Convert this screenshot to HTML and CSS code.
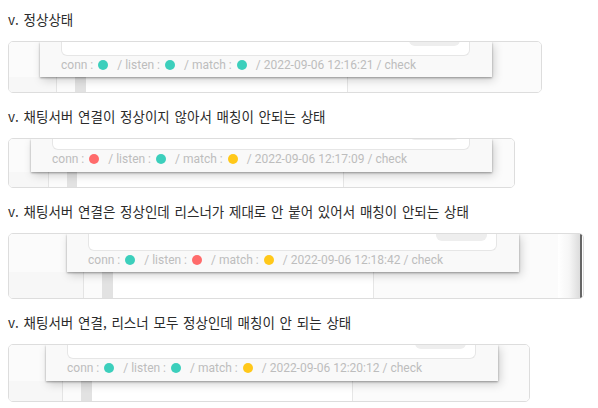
FILE: index.html
```html
<!DOCTYPE html>
<html lang="ko">
<head>
    <meta charset="UTF-8">
    <meta name="viewport" content="width=device-width, initial-scale=1.0">
    <title>채팅서버 상태 체크</title>
    <link rel="stylesheet" href="styles.css">
</head>
<body>

    <!-- 1. normal -->
    <p class="caption">v. 정상상태</p>
    <div class="shot shot-1">
        <div class="screen">
            <div class="panel">
                <div class="box"><span class="box-btn"></span></div>
                <div class="status">conn :<i class="dot ok"></i>/ listen :<i class="dot ok"></i>/ match :<i class="dot ok"></i>/ 2022-09-06 12:16:21 / check</div>
            </div>
            <div class="below">
                <span class="gutter"></span><span class="bar"></span><span class="mid"></span>
            </div>
        </div>
    </div>

    <!-- 2. chat server down -->
    <p class="caption">v. 채팅서버 연결이 정상이지 않아서 매칭이 안되는 상태</p>
    <div class="shot shot-2">
        <div class="screen">
            <div class="panel">
                <div class="box"><span class="box-btn"></span></div>
                <div class="status">conn :<i class="dot bad"></i>/ listen :<i class="dot ok"></i>/ match :<i class="dot warn"></i>/ 2022-09-06 12:17:09 / check</div>
            </div>
            <div class="below">
                <span class="gutter"></span><span class="bar"></span><span class="mid"></span>
            </div>
        </div>
    </div>

    <!-- 3. listener down -->
    <p class="caption">v. 채팅서버 연결은 정상인데 리스너가 제대로 안 붙어 있어서 매칭이 안되는 상태</p>
    <div class="shot shot-3">
        <div class="screen">
            <div class="panel">
                <div class="box"><span class="box-btn"></span></div>
                <div class="status">conn :<i class="dot ok"></i>/ listen :<i class="dot bad"></i>/ match :<i class="dot warn"></i>/ 2022-09-06 12:18:42 / check</div>
            </div>
            <div class="below">
                <span class="gutter"></span><span class="bar"></span><span class="mid"></span>
            </div>
        </div>
        <div class="edge"></div>
    </div>

    <!-- 4. matching only -->
    <p class="caption">v. 채팅서버 연결, 리스너 모두 정상인데 매칭이 안 되는 상태</p>
    <div class="shot shot-4">
        <div class="screen">
            <div class="panel">
                <div class="box"><span class="box-btn"></span></div>
                <div class="status">conn :<i class="dot ok"></i>/ listen :<i class="dot ok"></i>/ match :<i class="dot warn"></i>/ 2022-09-06 12:20:12 / check</div>
            </div>
            <div class="below">
                <span class="gutter"></span><span class="bar"></span><span class="mid"></span>
            </div>
        </div>
    </div>

</body>
</html>
```

FILE: styles.css
```css
body {
    margin: 0;
    padding: 9px 8px 0;
    background-color: #fff;
    font-family: 'Noto Sans CJK KR', 'Noto Sans', sans-serif;
    color: #333;
}
.caption {
    margin: 0;
    font-size: 13.5px;
    line-height: 20px;
    word-spacing: 1px;
    color: #2b2b2b;
}

/* screenshot frame */
.shot {
    display: flex;
    margin: 12px 0 13px;
    border: 1px solid #ddd;
    border-radius: 5px;
    background-color: #fff;
    overflow: hidden;
}
.screen {
    flex: 1;
    display: flex;
    flex-direction: column;
    background-color: #fbfbfb;
}
.panel {
    position: relative;
    z-index: 1;
    margin-left: 31px;
    width: 452px;
    background-color: #f9f9f9;
    box-shadow: 0 1px 2px rgba(0, 0, 0, 0.35), 2px 3px 9px rgba(0, 0, 0, 0.18);
}
.box {
    box-sizing: border-box;
    height: 14px;
    margin: 0 22px 0 21px;
    display: flex;
    justify-content: flex-end;
    align-items: flex-end;
    background-color: #fff;
    border: 1px solid #e6e6e6;
    border-top: none;
    border-radius: 0 0 6px 6px;
}
.box-btn {
    width: 51px;
    height: 100%;
    margin: 0 9px 9px 0;
    background-color: #eee;
    border-radius: 0 0 6px 6px;
}
.status {
    box-sizing: border-box;
    height: 21px;
    padding-left: 21px;
    font-family: Roboto, 'Noto Sans', sans-serif;
    font-size: 12px;
    line-height: 18px;
    color: #bdbdbd;
    white-space: nowrap;
}
.dot {
    display: inline-block;
    width: 10px;
    height: 10px;
    margin: 0 9px 0 5px;
    border-radius: 50%;
    vertical-align: -1px;
}
.dot.ok { background-color: #3ccfbc; }
.dot.bad { background-color: #ff6b6b; }
.dot.warn { background-color: #ffc81a; }

/* page behind the popup */
.below {
    flex: 1;
    display: flex;
}
.gutter {
    width: 47px;
    background-color: #f7f7f7;
    border-right: 1px solid #e4e4e4;
}
.bar {
    width: 11px;
    margin-left: 18px;
    background-color: #e2e2e2;
}
.mid {
    width: 261px;
    background-color: #fff;
    border-right: 1px solid #e6e6e6;
}

/* right edge of the third capture */
.edge {
    width: 22px;
    margin-right: 1px;
    background: linear-gradient(to right, #fff 0%, #f6f6f6 50%, #dcdcdc 100%);
    border-right: 2px solid #666;
}

/* per capture sizes */
.shot-1 { width: 532px; height: 50px; }
.shot-1 .panel { margin-left: 31px; width: 452px; }
.shot-1 .box { height: 14px; }
.shot-1 .gutter { width: 47px; }

.shot-2 { width: 505px; height: 48px; }
.shot-2 .panel { margin-left: 22px; width: 461px; }
.shot-2 .box { height: 11px; }
.shot-2 .status { height: 22px; }
.shot-2 .gutter { width: 39px; }
.shot-2 .bar { width: 10px; }
.shot-2 .mid { width: 266px; }

.shot-3 { width: 574px; height: 64px; }
.shot-3 .panel { margin-left: 58px; width: 452px; }
.shot-3 .box { height: 17px; }
.shot-3 .gutter { width: 74px; }
.shot-3 .mid { width: 260px; }

.shot-4 { width: 520px; height: 56px; }
.shot-4 .panel { margin-left: 37px; width: 452px; }
.shot-4 .box { height: 14px; }
.shot-4 .status { height: 22px; }
.shot-4 .gutter { width: 53px; }
.shot-4 .mid { width: 260px; }
```
